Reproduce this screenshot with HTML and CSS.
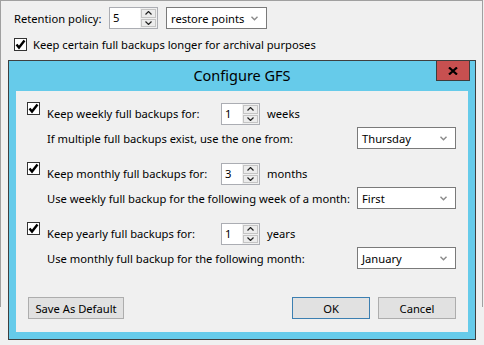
FILE: index.html
```html
<!DOCTYPE html>
<html lang="en">
<head>
    <meta charset="UTF-8">
    <title>Retention settings</title>
    <link rel="stylesheet" href="styles.css">
</head>
<body>

    <div class="panel">
        <div class="policy-row">
            <span class="policy-label">Retention policy:</span>
            <span class="spin spin-wide">
                <span class="spin-value">5</span>
                <span class="spin-arrows">
                    <span class="spin-btn"><svg width="7" height="4" viewBox="0 0 7 4"><path d="M0.5 3.5 L3.5 0.5 L6.5 3.5" fill="none" stroke="#222" stroke-width="1.2"/></svg></span>
                    <span class="spin-btn"><svg width="7" height="4" viewBox="0 0 7 4"><path d="M0.5 0.5 L3.5 3.5 L6.5 0.5" fill="none" stroke="#222" stroke-width="1.2"/></svg></span>
                </span>
            </span>
            <span class="combo combo-points">restore points
                <svg class="combo-arrow" width="7" height="5" viewBox="0 0 7 5"><path d="M0.5 0.8 L3.5 3.8 L6.5 0.8" fill="none" stroke="#8a8a8a" stroke-width="1.4"/></svg>
            </span>
        </div>
        <div class="check-row">
            <span class="check"><svg width="11" height="11" viewBox="0 0 11 11"><path d="M1.5 5.5 L4 8.5 L9.5 1.5" fill="none" stroke="#000" stroke-width="2.4"/></svg></span>
            <span>Keep certain full backups longer for archival purposes</span>
        </div>
    </div>

    <div class="dialog">
        <div class="titlebar">
            Configure GFS
            <span class="close"><svg width="10" height="8" viewBox="0 0 10 8"><path d="M1 0.5 L9 7.5 M9 0.5 L1 7.5" stroke="#000" stroke-width="2.2"/></svg></span>
        </div>
        <div class="content">

            <div class="gfs-group">
                <div class="gfs-row">
                    <span class="check"><svg width="11" height="11" viewBox="0 0 11 11"><path d="M1.5 5.5 L4 8.5 L9.5 1.5" fill="none" stroke="#000" stroke-width="2.4"/></svg></span>
                    <span class="gfs-label">Keep weekly full backups for:</span>
                    <span class="spin">
                        <span class="spin-value">1</span>
                        <span class="spin-arrows">
                            <span class="spin-btn"><svg width="7" height="4" viewBox="0 0 7 4"><path d="M0.5 3.5 L3.5 0.5 L6.5 3.5" fill="none" stroke="#222" stroke-width="1.2"/></svg></span>
                            <span class="spin-btn"><svg width="7" height="4" viewBox="0 0 7 4"><path d="M0.5 0.5 L3.5 3.5 L6.5 0.5" fill="none" stroke="#222" stroke-width="1.2"/></svg></span>
                        </span>
                    </span>
                    <span class="gfs-unit">weeks</span>
                </div>
                <div class="gfs-sub">
                    <span>If multiple full backups exist, use the one from:</span>
                    <span class="combo">Thursday
                        <svg class="combo-arrow" width="7" height="5" viewBox="0 0 7 5"><path d="M0.5 0.8 L3.5 3.8 L6.5 0.8" fill="none" stroke="#8a8a8a" stroke-width="1.4"/></svg>
                    </span>
                </div>
            </div>

            <div class="gfs-group">
                <div class="gfs-row">
                    <span class="check"><svg width="11" height="11" viewBox="0 0 11 11"><path d="M1.5 5.5 L4 8.5 L9.5 1.5" fill="none" stroke="#000" stroke-width="2.4"/></svg></span>
                    <span class="gfs-label">Keep monthly full backups for:</span>
                    <span class="spin">
                        <span class="spin-value">3</span>
                        <span class="spin-arrows">
                            <span class="spin-btn"><svg width="7" height="4" viewBox="0 0 7 4"><path d="M0.5 3.5 L3.5 0.5 L6.5 3.5" fill="none" stroke="#222" stroke-width="1.2"/></svg></span>
                            <span class="spin-btn"><svg width="7" height="4" viewBox="0 0 7 4"><path d="M0.5 0.5 L3.5 3.5 L6.5 0.5" fill="none" stroke="#222" stroke-width="1.2"/></svg></span>
                        </span>
                    </span>
                    <span class="gfs-unit">months</span>
                </div>
                <div class="gfs-sub">
                    <span>Use weekly full backup for the following week of a month:</span>
                    <span class="combo">First
                        <svg class="combo-arrow" width="7" height="5" viewBox="0 0 7 5"><path d="M0.5 0.8 L3.5 3.8 L6.5 0.8" fill="none" stroke="#8a8a8a" stroke-width="1.4"/></svg>
                    </span>
                </div>
            </div>

            <div class="gfs-group">
                <div class="gfs-row">
                    <span class="check"><svg width="11" height="11" viewBox="0 0 11 11"><path d="M1.5 5.5 L4 8.5 L9.5 1.5" fill="none" stroke="#000" stroke-width="2.4"/></svg></span>
                    <span class="gfs-label">Keep yearly full backups for:</span>
                    <span class="spin">
                        <span class="spin-value">1</span>
                        <span class="spin-arrows">
                            <span class="spin-btn"><svg width="7" height="4" viewBox="0 0 7 4"><path d="M0.5 3.5 L3.5 0.5 L6.5 3.5" fill="none" stroke="#222" stroke-width="1.2"/></svg></span>
                            <span class="spin-btn"><svg width="7" height="4" viewBox="0 0 7 4"><path d="M0.5 0.5 L3.5 3.5 L6.5 0.5" fill="none" stroke="#222" stroke-width="1.2"/></svg></span>
                        </span>
                    </span>
                    <span class="gfs-unit">years</span>
                </div>
                <div class="gfs-sub">
                    <span>Use monthly full backup for the following month:</span>
                    <span class="combo">January
                        <svg class="combo-arrow" width="7" height="5" viewBox="0 0 7 5"><path d="M0.5 0.8 L3.5 3.8 L6.5 0.8" fill="none" stroke="#8a8a8a" stroke-width="1.4"/></svg>
                    </span>
                </div>
            </div>

            <div class="button-row">
                <button class="btn btn-save">Save As Default</button>
                <button class="btn btn-ok">OK</button>
                <button class="btn">Cancel</button>
            </div>
        </div>
    </div>

</body>
</html>
```

FILE: styles.css
```css
/* Windows 8 style dialog */
body {
    margin: 0;
    background-color: #f0f0f0;
    color: #000000;
    font-family: 'Noto Sans', 'Open Sans', sans-serif;
    font-size: 11.2px;
    white-space: nowrap;
    position: relative;
    height: 345px;
    overflow: hidden;
}

.panel {
    width: 483px;
    height: 307px;
    box-sizing: border-box;
    border: 1px solid #a0a0a0;
    border-bottom: none;
    padding: 6px 0 0 13px;
}

.policy-row {
    display: flex;
    align-items: center;
    height: 22px;
}

.policy-label {
    width: 95px;
}

.check-row {
    display: flex;
    align-items: center;
    height: 14px;
    margin-top: 8px;
}

.check-row .check {
    margin-right: 6px;
}

/* checkbox */
.check {
    width: 13px;
    height: 13px;
    box-sizing: border-box;
    border: 1px solid #333333;
    background-color: #ffffff;
    display: flex;
    align-items: center;
    justify-content: center;
    flex: none;
}

/* spinner */
.spin {
    display: flex;
    width: 39px;
    height: 22px;
    box-sizing: border-box;
    border: 1px solid #abadb3;
    background-color: #ffffff;
    flex: none;
}

.spin-wide {
    width: 49px;
    margin-right: 8px;
}

.spin-value {
    flex: 1;
    padding-left: 3px;
    line-height: 20px;
}

.spin-arrows {
    width: 15px;
    display: flex;
    flex-direction: column;
    background-color: #f0f0f0;
    padding: 1px;
    gap: 1px;
}

.spin-btn {
    flex: 1;
    border: 1px solid #c4c4c4;
    background-color: #ececec;
    display: flex;
    align-items: center;
    justify-content: center;
}

/* dropdown */
.combo {
    width: 99px;
    height: 22px;
    box-sizing: border-box;
    border: 1px solid #7a7a7a;
    background-color: #ffffff;
    display: flex;
    align-items: center;
    justify-content: space-between;
    padding: 0 8px 0 4px;
    flex: none;
}

.combo-points {
    width: 101px;
}

/* dialog */
.dialog {
    position: absolute;
    left: 8px;
    top: 60px;
    width: 468px;
    height: 280px;
    box-sizing: border-box;
    border: 1px solid #3f3f3f;
    background-color: #66cbea;
    display: flex;
    flex-direction: column;
}

.titlebar {
    position: relative;
    height: 30px;
    line-height: 28px;
    text-align: center;
    font-size: 14.5px;
}

.close {
    position: absolute;
    top: -1px;
    right: 5px;
    width: 34px;
    height: 21px;
    box-sizing: border-box;
    border: 1px solid #3d3d3d;
    background-color: #c75050;
    display: flex;
    align-items: center;
    justify-content: center;
}

.content {
    flex: 1;
    margin: 0 7px 7px;
    background-color: #f0f0f0;
    padding: 11px 12px 13px 11px;
    display: flex;
    flex-direction: column;
}

.gfs-group {
    margin-bottom: 13px;
}

.gfs-row {
    display: flex;
    align-items: flex-start;
    height: 24px;
}

.gfs-row .check {
    margin-right: 7px;
}

.gfs-label {
    width: 174px;
    line-height: 22px;
    margin-top: 1px;
}

.gfs-row .spin {
    margin-top: 1px;
}

.gfs-unit {
    margin-left: 7px;
    line-height: 22px;
    margin-top: 1px;
}

.gfs-sub {
    display: flex;
    justify-content: space-between;
    align-items: center;
    margin-top: 1px;
    padding-left: 20px;
}

.button-row {
    display: flex;
    margin-top: auto;
    gap: 8px;
    margin-left: 1px;
}

.btn {
    width: 78px;
    height: 22px;
    border: 1px solid #adadad;
    background-color: #e1e1e1;
    font-family: inherit;
    font-size: inherit;
    color: #000000;
    padding: 0;
}

.btn-save {
    width: 96px;
    margin-right: auto;
}

.btn-ok {
    border-color: #3c7fb1;
}
```
